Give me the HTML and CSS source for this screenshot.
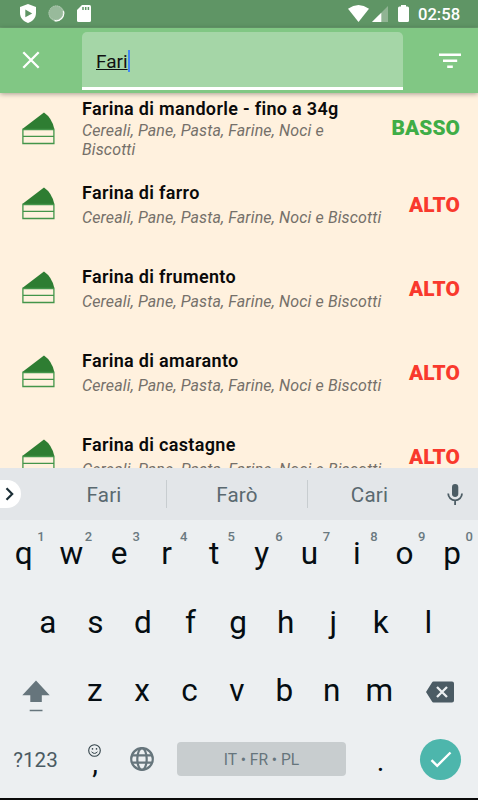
FILE: index.html
```html
<!DOCTYPE html>
<html lang="it">
<head>
<meta charset="utf-8">
<title>Alimenti</title>
<link rel="stylesheet" href="styles.css">
</head>
<body>
<svg class="defs" width="0" height="0">
  <symbol id="cake" viewBox="0 0 33 33">
    <path d="M.300 17 22 .500Q30 6 32.300 17Z" fill="#2e7d32"/>
    <path d="M.900 17.500h31v14h-31zM.900 24.300h31" fill="none" stroke="#43954a" stroke-width="1.300"/>
  </symbol>
</svg>
<header class="status">
  <svg class="shield" width="16" height="19" viewBox="0 0 16 19"><path d="M8 0 16 3v6c0 5-3.500 8.500-8 10C3.500 17.500 0 14 0 9V3z" fill="#fff"/><path d="M5.300 5.500v7.800L12.200 9.400z" fill="#5f9565"/></svg>
  <svg class="sync" width="17" height="17" viewBox="0 0 17 17"><circle cx="8.500" cy="8.500" r="7.900" fill="#a2c1a5"/><path d="M15.200 6A7.500 7.500 0 0 1 6.500 15.500" fill="none" stroke="#fff" stroke-width="1.500"/><circle cx="7.900" cy="7.900" r="7" fill="#98ba9b" stroke="#b0cab2" stroke-dasharray="1 1"/></svg>
  <svg class="sd" width="14" height="17" viewBox="0 0 14 17"><path d="M5 0h7.500Q14 0 14 1.500v14q0 1.500-1.500 1.500h-11Q0 17 0 15.500V5z" fill="#fff"/><path d="M6 2v3M8.700 2v3M11.400 2v3" stroke="#5f9565" stroke-width="1.500"/></svg>
  <span class="spacer"></span>
  <svg class="wifi" width="21" height="17" viewBox="0 0 21 17"><path d="M0 3.700Q10.500-3.500 21 3.700L10.500 17z" fill="#fff"/></svg>
  <svg class="signal" width="16" height="16" viewBox="0 0 16 16"><path d="M0 16 16 0v16z" fill="#90b493"/><path d="M0 16 9.300 6.700V16z" fill="#fff"/></svg>
  <svg class="battery" width="11" height="17" viewBox="0 0 11 17"><path d="M3 0h5v1.500h1.500Q11 1.500 11 3v12.500Q11 17 9.500 17h-8Q0 17 0 15.500V3q0-1.500 1.500-1.500H3z" fill="#fff"/></svg>
  <span class="clock">02:58</span>
</header>
<div class="appbar">
  <svg class="close" width="18" height="18" viewBox="0 0 18 18"><path d="m1.300 1.300 15.400 15.400m0-15.400L1.300 16.700" stroke="#fff" stroke-width="2.300"/></svg>
  <div class="search"><span class="query">Fari</span><span class="caret"></span></div>
  <svg class="filter" width="22" height="16" viewBox="0 0 22 16"><path d="M0 1.700h22M4 7.700h14.200M8.200 13.700h5.600" stroke="#fff" stroke-width="2.500"/></svg>
</div>
<main class="list">
  <article class="item first">
    <svg class="cake"><use href="#cake"/></svg>
    <div class="info"><h2>Farina di mandorle - fino a 34g</h2><p>Cereali, Pane, Pasta, Farine, Noci e<br>Biscotti</p></div>
    <b class="level low">BASSO</b>
  </article>
  <article class="item">
    <svg class="cake"><use href="#cake"/></svg>
    <div class="info"><h2>Farina di farro</h2><p>Cereali, Pane, Pasta, Farine, Noci e Biscotti</p></div>
    <b class="level">ALTO</b>
  </article>
  <article class="item">
    <svg class="cake"><use href="#cake"/></svg>
    <div class="info"><h2>Farina di frumento</h2><p>Cereali, Pane, Pasta, Farine, Noci e Biscotti</p></div>
    <b class="level">ALTO</b>
  </article>
  <article class="item">
    <svg class="cake"><use href="#cake"/></svg>
    <div class="info"><h2>Farina di amaranto</h2><p>Cereali, Pane, Pasta, Farine, Noci e Biscotti</p></div>
    <b class="level">ALTO</b>
  </article>
  <article class="item">
    <svg class="cake"><use href="#cake"/></svg>
    <div class="info"><h2>Farina di castagne</h2><p>Cereali, Pane, Pasta, Farine, Noci e Biscotti</p></div>
    <b class="level">ALTO</b>
  </article>
</main>
<section class="keyboard">
  <div class="suggest">
    <span class="more"><svg width="9" height="14" viewBox="0 0 9 14"><path d="m1.500 1.200 5.700 5.800-5.700 5.800" fill="none" stroke="#1b2e36" stroke-width="2.200"/></svg></span>
    <span class="word w1">Fari</span><span class="word w2">Farò</span><span class="word w3">Cari</span>
    <svg class="mic" width="16" height="21" viewBox="0 0 16 21"><rect x="5" y="0" width="6.300" height="13" rx="3.150" fill="#4d5d65"/><path d="M1.200 9.500a6.900 6.900 0 0 0 13.800 0M8.100 16.200V21" fill="none" stroke="#4d5d65" stroke-width="1.800"/></svg>
  </div>
  <div class="keys top">
    <span class="key">q<sup>1</sup></span><span class="key">w<sup>2</sup></span><span class="key">e<sup>3</sup></span><span class="key">r<sup>4</sup></span><span class="key">t<sup>5</sup></span><span class="key">y<sup>6</sup></span><span class="key">u<sup>7</sup></span><span class="key">i<sup>8</sup></span><span class="key">o<sup>9</sup></span><span class="key">p<sup>0</sup></span>
  </div>
  <div class="keys middle">
    <span class="key">a</span><span class="key">s</span><span class="key">d</span><span class="key">f</span><span class="key">g</span><span class="key">h</span><span class="key">j</span><span class="key">k</span><span class="key">l</span>
  </div>
  <div class="keys lower">
    <span class="wide shift"><svg width="28" height="32" viewBox="0 0 28 32"><path d="M14 .500 27.700 15.300h-7.900V22H8.300v-6.700H.300z" fill="#66757c"/><path d="M7.700 30.500h12.800" stroke="#66757c" stroke-width="1.500"/></svg></span>
    <span class="key">z</span><span class="key">x</span><span class="key">c</span><span class="key">v</span><span class="key">b</span><span class="key">n</span><span class="key">m</span>
    <span class="wide erase"><svg width="28" height="22" viewBox="0 0 28 22"><path d="M7.500.500H26q2 0 2 2v17q0 2-2 2H7.500Q6.500 21.500 6 20.500L0 11 6 1.500Q6.500.500 7.500.500z" fill="#4b5b64"/><path d="m11 6 10 10m0-10L11 16" stroke="#eceff1" stroke-width="2.300"/></svg></span>
  </div>
  <div class="keys bottom">
    <span class="symbols">?123</span>
    <span class="comma"><svg width="13" height="13" viewBox="0 0 13 13"><circle cx="6.500" cy="6.500" r="5.800" fill="none" stroke="#33434a" stroke-width="1.100"/><path d="M3.500 7.800q3 3.200 6 0" fill="none" stroke="#33434a"/><circle cx="4.500" cy="4.900" r=".8" fill="#33434a"/><circle cx="8.500" cy="4.900" r=".8" fill="#33434a"/></svg><i>,</i></span>
    <svg class="globe" width="24" height="24" viewBox="0 0 24 24"><g fill="none" stroke="#66757c" stroke-width="2.200"><circle cx="12" cy="12" r="10.800"/><ellipse cx="12" cy="12" rx="4.700" ry="10.800"/><path d="M2 8.400h20M2 15.600h20"/></g></svg>
    <span class="space">IT • FR • PL</span>
    <span class="dot">.</span>
    <span class="enter"><svg width="22" height="17" viewBox="0 0 22 17"><path d="m1.500 9.200 5.700 5.600L20.500 1.500" fill="none" stroke="#fff" stroke-width="2.400"/></svg></span>
  </div>
</section>
</body>
</html>
```
FILE: styles.css
```css
* { box-sizing: border-box; }
body {
  margin: 0;
  width: 478px;
  height: 800px;
  overflow: hidden;
  display: flex;
  flex-direction: column;
  font-family: Roboto, "Liberation Sans", sans-serif;
  background: #fff1de;
}
svg { display: block; flex: none; }
.defs { position: absolute; }

.status {
  height: 28px;
  flex: none;
  display: flex;
  align-items: center;
  padding: 0 18px 0 20px;
  background: #5f9565;
  border-bottom: 1px solid #6ba070;
}
.sync { margin-left: 12px; }
.sd { margin-left: 12px; }
.spacer { flex: 1; }
.wifi { margin-right: 1px; }
.signal { margin-left: 2px; margin-top: 1px; }
.battery { margin-left: 10px; }
.clock {
  width: 42px;
  margin-left: 9px;
  padding-top: 2px;
  font-size: 16.6px;
  line-height: 20px;
  font-weight: 500;
  color: #fff;
  white-space: nowrap;
}

.appbar {
  height: 65px;
  flex: none;
  display: flex;
  align-items: center;
  padding-left: 22px;
  background: #81c784;
  box-shadow: 0 1px 5px rgba(0, 0, 0, .35);
  z-index: 1;
}
.close { margin-top: -1px; }
.search {
  width: 321px;
  height: 58px;
  margin: 1px 36px 0 42px;
  padding: 4px 0 0 14px;
  display: flex;
  align-items: center;
  background: #a5d6a7;
  border-bottom: 3px solid #fff;
  border-radius: 5px 5px 0 0;
}
.filter { margin-top: 0; }
.query {
  font-size: 19px;
  line-height: 22px;
  color: #111;
  text-decoration: underline;
  text-decoration-thickness: 1px;
  text-underline-offset: 1px;
}
.caret { width: 2px; height: 22px; margin-top: -2px; background: #4285f4; }

.list { height: 375px; flex: none; overflow: hidden; }
.item {
  height: 84px;
  display: flex;
  align-items: center;
  padding: 0 18px 0 22px;
}
.first { height: 69px; }
.cake { width: 33px; height: 33px; margin-top: -1px; }
.first .cake { margin-top: 2px; }
.info {
  flex: 1;
  align-self: stretch;
  margin-left: 27px;
  padding-top: 21px;
  white-space: nowrap;
}
.first .info { padding-top: 6px; }
h2 {
  margin: 0;
  font-size: 18px;
  line-height: 20px;
  font-weight: 600;
  letter-spacing: .32px;
  color: #0a0a0a;
}
p {
  margin: 5px 0 0;
  font-size: 16px;
  line-height: 19px;
  font-style: italic;
  font-weight: 400;
  letter-spacing: .14px;
  color: #75706a;
}
.first p { margin-top: 2px; }
.level {
  margin-top: 1px;
  font-size: 20.8px;
  line-height: 24px;
  font-weight: 900;
  letter-spacing: .1px;
  color: #f9392d;
}
.low { color: #3fad47; }

.keyboard {
  flex: 1;
  background: #eceff1;
  border-bottom: 2px solid #0a0a0a;
}
.suggest {
  height: 52px;
  display: flex;
  align-items: center;
  background: #e3e6e9;
}
.more {
  width: 21px;
  height: 28px;
  display: flex;
  align-items: center;
  padding-left: 5px;
  border-radius: 0 14px 14px 0;
  background: #fff;
}
.word {
  height: 28px;
  line-height: 30px;
  text-align: center;
  font-size: 20.6px;
  letter-spacing: .2px;
  color: #5a6970;
}
.w1 { width: 146px; padding-left: 21px; border-right: 1px solid #c8cdd0; }
.w2 { width: 141px; border-right: 1px solid #c8cdd0; }
.w3 { width: 123px; }
.mic { margin-left: 16px; }

.keys { height: 69px; display: flex; align-items: center; }
.top { padding: 0 2px 1px 0; }
.middle { padding: 0 26px 1px 24px; height: 68px; }
.lower { padding-bottom: 1px; }
.key {
  flex: 1;
  position: relative;
  text-align: center;
  font-size: 31.5px;
  line-height: 40px;
  color: #050d12;
}
.key sup {
  position: absolute;
  top: -5px;
  right: 3px;
  font-size: 13px;
  line-height: 16px;
  font-weight: 500;
  color: #6a7980;
}
.wide { width: 71px; display: flex; justify-content: center; }
.shift { padding-top: 9px; }
.erase { width: 75px; padding: 2px 0 0 0; }
.bottom { height: 66px; }
.symbols {
  width: 71px;
  text-align: center;
  font-size: 20.6px;
  padding-top: 2px;
  color: #4a5a62;
}
.comma {
  width: 48px;
  display: flex;
  flex-direction: column;
  align-items: center;
}
.comma svg { margin: 5px 1px 0 0; }
.comma i {
  font-style: normal;
  font-size: 29px;
  line-height: 13px;
  height: 22px;
  color: #050d12;
}
.globe { margin-left: 11px; }
.space {
  width: 169px;
  height: 34px;
  margin-left: 23px;
  border-radius: 4px;
  background: #c8cdcf;
  text-align: center;
  font-size: 15.6px;
  line-height: 36px;
  color: #66757c;
}
.dot {
  width: 69px;
  text-align: center;
  font-size: 29px;
  padding-top: 4px;
  color: #050d12;
}
.enter {
  width: 41px;
  height: 41px;
  margin: 1px 0 0 5px;
  border-radius: 50%;
  display: flex;
  align-items: center;
  justify-content: center;
  background: #4db6ac;
}
```
